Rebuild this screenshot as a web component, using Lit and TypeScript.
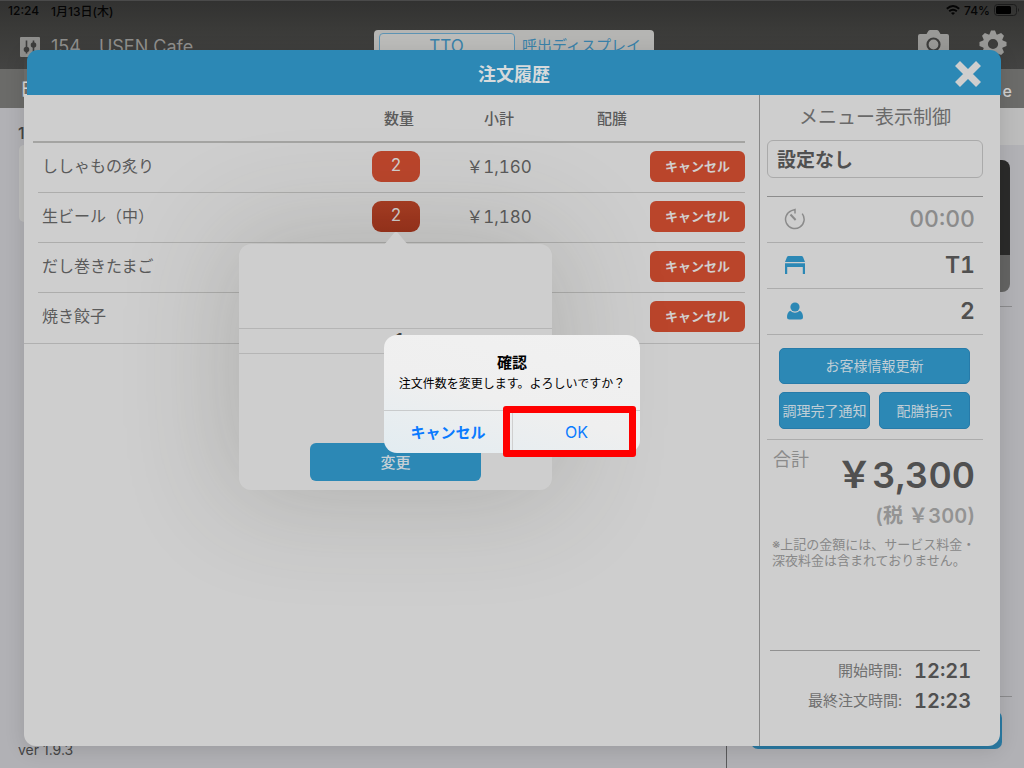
import { LitElement, html, css, svg, nothing } from "lit";
import { customElement, property, state } from "lit/decorators.js";

interface OrderLine {
  name: string;
  qty?: number;
  subtotal?: string;
  active?: boolean;
}

const LINES: OrderLine[] = [
  { name: "ししゃもの炙り", qty: 2, subtotal: "￥1,160" },
  { name: "生ビール（中）", qty: 2, subtotal: "￥1,180", active: true },
  { name: "だし巻きたまご" },
  { name: "焼き餃子" },
];

const TEETH = [0, 45, 90, 135, 180, 225, 270, 315];

const mixerIcon = svg`<svg width="20" height="20" viewBox="0 0 20 20">
  <rect width="20" height="20" rx="1" fill="#8f8f8d"/>
  <g stroke="#3d3d3c" stroke-width="1.6" fill="#3d3d3c"><path d="M6.500 3.500V16.500M13.500 3.500V16.500"/>
  <circle cx="6.500" cy="12.500" r="2"/><circle cx="13.500" cy="8" r="2"/></g></svg>`;

const cameraIcon = svg`<svg width="31" height="26" viewBox="0 0 31 26">
  <path fill="#999997" d="M2 4h6.500l1.500-2.500Q10.500 0 12 0h7q1.500 0 2 1.500L22.500 4H29q2 0 2 2v18q0 2-2 2H2q-2 0-2-2V6q0-2 2-2z"/>
  <circle cx="15.500" cy="14.500" r="6" fill="#999997" stroke="#3d3d3c" stroke-width="2.200"/></svg>`;

const gearIcon = svg`<svg width="28" height="28" viewBox="-14 -14 28 28">
  <g fill="#999997">${TEETH.map((a) => svg`<path transform="rotate(${a})" d="M-4.200-8L-2-13.500H2L4.200-8z"/>`)}</g>
  <circle r="7.600" fill="none" stroke="#999997" stroke-width="5"/></svg>`;

const wifiIcon = svg`<svg width="14" height="10" viewBox="0 0 14 10">
  <g fill="none" stroke="#050505" stroke-width="1.900"><path d="M.8 3.800Q7-1.800 13.200 3.800"/><path d="M3.200 6.300Q7 3 10.800 6.300"/></g>
  <path fill="#050505" d="M5 8Q7 6.400 9 8L7 10z"/></svg>`;

const batteryIcon = svg`<svg width="26" height="12" viewBox="0 0 26 12">
  <rect x=".5" y=".5" width="22" height="11" rx="3" fill="none" stroke="#1c1c1c"/>
  <rect x="2" y="2" width="15" height="8" rx="1.500" fill="#000"/><path d="M24 4q2 2 0 4z" fill="#1c1c1c"/></svg>`;

const closeIcon = svg`<svg width="28" height="28" viewBox="0 0 28 28">
  <path d="M3.500 3.500L24.500 24.500M24.500 3.500L3.500 24.500" stroke="#cecece" stroke-width="7"/></svg>`;

const timerIcon = svg`<svg width="22" height="22" viewBox="0 0 22 22">
  <g fill="none" stroke="#8b8b8b" stroke-width="1.500"><path d="M18.200 5.600A9.300 9.300 0 1 1 7.500 2.600L11 1.600V5.500"/>
  <path d="M6.500 6.500L11.600 12" stroke-width="2"/></g></svg>`;

const tableIcon = svg`<svg width="22" height="20" viewBox="0 0 22 20">
  <path fill="#2c88b5" d="M4.500 1h13q1 0 1.500 1l2 5H1l2-5q.5-1 1.500-1zM1 8.200h20V19h-2.200v-7H3.200v7H1z"/></svg>`;

const personIcon = svg`<svg width="18" height="20" viewBox="0 0 18 20">
  <g fill="#2c88b5"><circle cx="9" cy="6" r="4.600"/>
  <path d="M4.200 9.800Q9 13.800 13.800 9.800 17 11.500 17 16q0 2.500-2.500 2.500h-11Q1 18.500 1 16 1 11.500 4.200 9.800z"/></g></svg>`;

@customElement("base-screen")
class BaseScreen extends LitElement {
  static styles = css`
    :host { display: flex; flex-direction: column; min-height: 100vh; background: #b1b1b5; color: #454545; overflow: hidden; font-variant-numeric: normal; }
    .top { background: linear-gradient(#323231, #3a3a38 40%, #434342); height: 69px; border-top: 1px solid #4a4a4a; box-sizing: border-box; }
    .status { display: flex; align-items: center; height: 18px; padding: 0 4px 0 8px; color: #050505; font-size: 12px; font-weight: 500; gap: 4px; }
    .date { margin-left: 8px; flex: 1; }
    .nav { display: grid; grid-template-columns: 1fr 280px 1fr; padding: 11px 17px 0 20px; align-items: start; }
    .store { display: flex; align-items: center; gap: 11px; font-size: 18px; line-height: 34px; color: #8f8f8d; }
    .seg { display: grid; grid-template-columns: 136px 1fr; padding: 3px 5px; height: 36px; box-sizing: border-box; background: #b5b5b3; border-radius: 4px; }
    .seg button { border: 0; background: none; color: #3a82aa; font: inherit; font-size: 15px; line-height: 22px; padding: 0 0 4px; white-space: nowrap; }
    .seg .on { border: 1px solid #5c93b3; border-radius: 4px; background: #bcbcba; font-size: 17px; }
    .tools { display: flex; justify-content: flex-end; gap: 30px; }
    .tools button { padding: 0; border: 0; background: none; display: block; height: 28px; }
    .sub { height: 39px; background: #6b6b69; display: flex; justify-content: space-between; align-items: center; padding: 0 12px 0 20px; color: #d0d0d0; font-size: 17px; line-height: 20px; font-weight: 500; }
    .user { font-size: 16px; padding-top: 4px; }
    .cols { flex: 1; display: grid; grid-template-columns: 1fr 297px; }
    .left { border-right: 1px solid #5a5a5c; padding: 15px 0 8px 18px; display: flex; flex-direction: column; font-size: 16px; }
    .num { line-height: 20px; font-weight: 500; }
    .card { height: 77px; background: #bebebd; border-radius: 5px; margin: 2px 0 auto 1px; }
    .ver { font-size: 14px; line-height: 20px; }
    .right { display: flex; flex-direction: column; }
    .strip { height: 37px; background: #bcbcbc; }
    .photo { height: 132px; margin: 15px 14px 0 24px; border-radius: 8px; background: linear-gradient(#2b2b2a 95px, #646463 95px); }
    .rule { height: 1px; background: #8b8b8d; margin: 14px 12px 0 24px; }
    .rule.low { margin-top: auto; }
    .go { height: 38px; margin: 14px 22px 19px 24px; border: 0; border-radius: 7px; background: #2a7ba4; }
  `;
  render() {
    return html`
      <header class="top">
        <div class="status"><span>12:24</span><span class="date">1月13日(木)</span>${wifiIcon}<span>74%</span>${batteryIcon}</div>
        <div class="nav">
          <div class="store">${mixerIcon}<span>154　USEN Cafe</span></div>
          <div class="seg"><button class="on">TTO</button><button>呼出ディスプレイ</button></div>
          <div class="tools"><button aria-label="カメラ">${cameraIcon}</button><button aria-label="設定">${gearIcon}</button></div>
        </div>
      </header>
      <div class="sub"><span>日</span><span class="user">e</span></div>
      <div class="cols">
        <div class="left"><span class="num">1</span><div class="card"></div><span class="ver">ver 1.9.3</span></div>
        <div class="right"><div class="strip"></div><div class="photo"></div><div class="rule"></div><div class="rule low"></div><button class="go"></button></div>
      </div>`;
  }
}

@customElement("order-table")
class OrderTable extends LitElement {
  @property({ attribute: false }) lines: OrderLine[] = [];
  static styles = css`
    :host { display: block; padding: 0 14px 0 9px; border-bottom: 1px solid #b0b0b0; }
    table { width: 100%; border-collapse: separate; border-spacing: 0; table-layout: fixed; color: #5a5a5a; }
    th, td { padding: 0; text-align: center; box-sizing: border-box; }
    th { height: 48px; padding-bottom: 2px; font-size: 15px; font-weight: 500; border-bottom: 2px solid #a4a4a2; }
    td { height: 50px; padding-bottom: 4px; font-size: 17px; background: linear-gradient(#adadac, #adadac) bottom / 100% 1px no-repeat; }
    .name { text-align: left; padding: 0 0 6px 9px; font-size: 16px; font-weight: 400; background-position: 5px 100%; }
    tr:last-child td { background: none; }
    .c-qty { width: 100px; }
    .c-sub { width: 106px; }
    .c-serve { width: 98px; }
    .c-act { width: 95px; }
    .h-qty { padding-left: 6px; }
    .h-serve { padding-left: 22px; }
    .yen { padding-bottom: 6px; font-weight: 400; }
    button { display: block; border: 0; padding: 0; height: 31px; border-radius: 6px; background: #ba452b; color: #d2cfce; font: inherit; }
    .qty { width: 48px; margin: 0 auto; padding-bottom: 2px; border-radius: 9px; font-size: 17px; font-weight: 400; }
    .qty.active { background: linear-gradient(#a83c22, #9b3019); }
    .cancel { width: 100%; padding-bottom: 2px; font-size: 13px; font-weight: 700; }
  `;
  render() {
    return html`<table>
      <colgroup><col /><col class="c-qty" /><col class="c-sub" /><col class="c-serve" /><col class="c-act" /></colgroup>
      <thead><tr><th></th><th class="h-qty">数量</th><th>小計</th><th class="h-serve">配膳</th><th></th></tr></thead>
      <tbody>${this.lines.map((l) => html`<tr>
        <td class="name">${l.name}</td>
        <td>${l.qty ? html`<button class="qty ${l.active ? "active" : ""}">${l.qty}</button>` : nothing}</td>
        <td class="yen">${l.subtotal}</td><td></td>
        <td><button class="cancel">キャンセル</button></td></tr>`)}
      </tbody></table>`;
  }
}

@customElement("table-summary")
class TableSummary extends LitElement {
  static styles = css`
    :host { display: flex; flex-direction: column; border-left: 1px solid #888; padding: 0 17px 30px 7px; color: #505050; }
    label { font-size: 19px; line-height: 46px; height: 45px; text-align: center; color: #696969; }
    select { appearance: none; width: 100%; height: 38px; border: 1px solid #aaa; border-radius: 6px; background: #cecece; color: #505050; font: inherit; font-size: 19px; font-weight: 700; padding: 2px 9px 0; }
    .facts { margin: 18px 0 0; border-top: 1px solid #8c8c8c; }
    .fact { display: flex; align-items: center; justify-content: space-between; height: 46px; box-sizing: border-box; border-bottom: 1px solid #acacac; padding: 0 8px 2px 17px; }
    .fact dt { width: 22px; display: flex; justify-content: center; }
    .fact dd { margin: 0; font-size: 23px; font-weight: 600; }
    .fact.idle dd { color: #8b8b8b; font-weight: 500; }
    .acts { display: grid; grid-template-columns: 1fr 1fr; gap: 8px 9px; padding: 13px 13px 10px 12px; border-bottom: 1px solid #acacac; }
    .acts button { height: 37px; border: 1px solid #277ba9; border-radius: 5px; background: #2c88b5; color: #c0ced6; font: inherit; font-size: 14px; font-weight: 400; padding: 0 0 2px; white-space: nowrap; }
    .acts .wide { grid-column: 1 / -1; height: 36px; }
    .total { display: flex; justify-content: space-between; padding: 0 8px 0 6px; }
    .total .cap { font-size: 18px; line-height: 40px; color: #8b8b8b; }
    .total .sum { font-size: 36px; line-height: 40px; padding-top: 15px; font-weight: 600; }
    .tax { margin-top: 8px; padding-right: 8px; text-align: right; font-size: 20px; line-height: 26px; font-weight: 600; color: #939393; }
    .note { margin: 7px 0 0 5px; font-size: 13px; line-height: 16px; color: #888; white-space: nowrap; }
    .times { margin: auto 3px 0; border-top: 1px solid #919191; padding-top: 5px; }
    .time { display: flex; align-items: center; justify-content: flex-end; padding-right: 9px; line-height: 30px; }
    .time dt { font-size: 15px; color: #707070; }
    .time dd { margin: 0 0 0 12px; width: 57px; font-size: 20px; font-weight: 600; white-space: nowrap; }
  `;
  render() {
    return html`
      <label for="menu">メニュー表示制御</label>
      <select id="menu"><option>設定なし</option></select>
      <dl class="facts">
        <div class="fact idle"><dt>${timerIcon}</dt><dd>00:00</dd></div>
        <div class="fact"><dt>${tableIcon}</dt><dd>T1</dd></div>
        <div class="fact"><dt>${personIcon}</dt><dd>2</dd></div>
      </dl>
      <div class="acts"><button class="wide">お客様情報更新</button><button>調理完了通知</button><button>配膳指示</button></div>
      <div class="total"><span class="cap">合計</span><span class="sum">￥3,300</span></div>
      <div class="tax">(税 ￥300)</div>
      <p class="note">※上記の金額には、サービス料金・<br />深夜料金は含まれておりません。</p>
      <dl class="times">
        <div class="time"><dt>開始時間:</dt><dd>12:21</dd></div>
        <div class="time"><dt>最終注文時間:</dt><dd>12:23</dd></div>
      </dl>`;
  }
}

@customElement("quantity-popover")
class QuantityPopover extends LitElement {
  static styles = css`
    :host { display: flex; flex-direction: column; align-items: center; width: 313px; height: 246px; box-sizing: border-box; background: #cecece; border-radius: 12px; padding: 84px 0 9px; box-shadow: 0 0 110px 10px rgba(60, 60, 50, 0.2); }
    .arrow { position: absolute; top: -13px; left: 144px; }
    .wheel { width: 100%; height: 26px; box-sizing: border-box; border: solid #b5b5b5; border-width: 1px 0; text-align: center; font-size: 20px; line-height: 24px; padding-left: 9px; color: #444; }
    button { width: 171px; height: 38px; margin-top: auto; padding: 0 0 2px; border: 0; border-radius: 6px; background: #2c88b5; color: #c6d0d6; font: inherit; font-size: 15px; font-weight: 500; }
  `;
  render() {
    return html`<svg class="arrow" width="26" height="14" viewBox="0 0 26 14"><path fill="#cecece" d="M0 14Q2 13 4 10.500L11 2Q13 0 15 2L22 10.500Q24 13 26 14z"/></svg>
      <div class="wheel">1</div><button>変更</button>`;
  }
}

@customElement("confirm-alert")
class ConfirmAlert extends LitElement {
  static styles = css`
    :host { display: block; width: 256px; border-radius: 13px; background: linear-gradient(15deg, #e2ecf1, #efefef 45%, #f1f1f1); color: #000; text-align: center; }
    h2 { margin: 0; padding-top: 18px; font-size: 15px; line-height: 20px; font-weight: 700; }
    p { margin: 0; padding: 2px 0 18px; font-size: 12px; line-height: 17px; white-space: nowrap; }
    .row { display: grid; grid-template-columns: 1fr 1fr; border-top: 1px solid #c9cbcc; }
    .row button { height: 42px; border: 0; padding: 0 0 2px; background: none; color: #0a7aff; font: inherit; font-size: 15px; font-weight: 700; }
    .row .ok { padding: 0; font-size: 16px; font-weight: 400; border-left: 1px solid #cfcfcf; }
    .mark { position: absolute; left: 119px; top: 71px; width: 133px; height: 51px; box-sizing: border-box; border: 7px solid #f00; border-radius: 3px; pointer-events: none; }
  `;
  render() {
    return html`<h2>確認</h2><p>注文件数を変更します。よろしいですか？</p>
      <div class="row"><button>キャンセル</button><button class="ok">OK</button></div><span class="mark"></span>`;
  }
}

@customElement("app-root")
class AppRoot extends LitElement {
  @state() private lines = LINES;
  static styles = css`
    :host { display: block; position: relative; min-height: 100vh; font-family: Inter, "Noto Sans CJK JP", sans-serif; font-variant-numeric: tabular-nums; }
    .modal { position: absolute; top: 50px; right: 24px; bottom: 22px; left: 24px; display: flex; flex-direction: column; border-radius: 12px; box-shadow: 0 4px 20px rgba(0, 0, 0, 0.13); }
    .bar { display: grid; grid-template-columns: 60px 1fr 60px; align-items: center; justify-items: center; height: 45px; margin: 0 -1px 0 3px; background: #2c88b5; border-radius: 11px 11px 0 0; color: #d6dadc; }
    .bar h1 { grid-column: 2; margin: 0; font-size: 18px; line-height: 24px; padding-top: 4px; font-weight: 700; }
    .bar button { border: 0; padding: 0; background: none; height: 28px; margin: 2px 6px 0 0; }
    .body { flex: 1; display: grid; grid-template-columns: 1fr 241px; background: #cecece; border-radius: 0 0 12px 12px; overflow: hidden; position: relative; }
    .orders { display: flex; flex-direction: column; }
    .pop { position: absolute; left: 215px; top: 149px; }
    .alert { position: absolute; left: 50%; margin-left: -128px; top: 335px; }
  `;
  render() {
    return html`
      <base-screen></base-screen>
      <div class="modal" role="dialog">
        <header class="bar"><h1>注文履歴</h1><button aria-label="閉じる">${closeIcon}</button></header>
        <div class="body">
          <div class="orders"><order-table .lines=${this.lines}></order-table></div>
          <table-summary></table-summary>
          <quantity-popover class="pop"></quantity-popover>
        </div>
      </div>
      <confirm-alert class="alert" role="alertdialog"></confirm-alert>`;
  }
}
